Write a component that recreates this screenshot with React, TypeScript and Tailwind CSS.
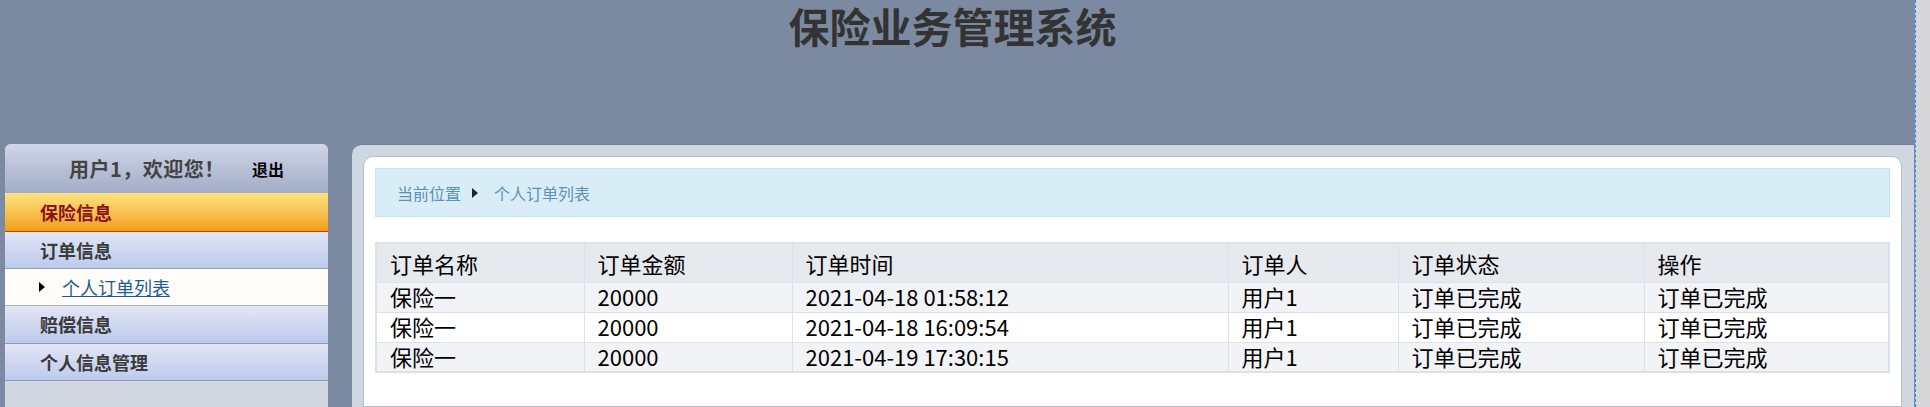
const menu = [
  { label: "保险信息", active: true, h: "h-[39px]" },
  { label: "订单信息", active: false, h: "h-[37px]" },
];

const rows = [
  ["保险一", "20000", "2021-04-18 01:58:12", "用户1", "订单已完成", "订单已完成"],
  ["保险一", "20000", "2021-04-18 16:09:54", "用户1", "订单已完成", "订单已完成"],
  ["保险一", "20000", "2021-04-19 17:30:15", "用户1", "订单已完成", "订单已完成"],
];

const heads = ["订单名称", "订单金额", "订单时间", "订单人", "订单状态", "操作"];
const widths = ["w-[208px]", "w-[208px]", "w-[436px]", "w-[170px]", "w-[246px]", ""];

const App = () => {
  return (
    <div className="flex h-[407px] w-[1930px] overflow-hidden bg-[#7b8aa1] font-['Noto_Sans_CJK_SC',sans-serif]">
      <div className="flex w-[1915px] shrink-0 flex-col">
        {/* Top banner */}
        <header className="h-[144px] shrink-0 pr-[10px] text-center">
          <h1 className="pt-px text-[41px] font-bold leading-[49px] text-[#333]">保险业务管理系统</h1>
        </header>

        <div className="flex min-h-0 flex-1 gap-[24px] pl-[5px]">
          {/* Sidebar */}
          <aside className="flex w-[323px] shrink-0 flex-col overflow-hidden rounded-t-[6px] bg-[#d1d7e1]">
            <div className="flex h-[49px] shrink-0 items-center bg-gradient-to-b from-[#d0d6e8] to-[#a2acc7] pl-[64px]">
              <span className="inline-block w-[183px] text-[20px] font-bold tracking-[0.5px] text-[#444]">用户1，欢迎您！</span>
              <span className="text-[16px] font-bold text-black">退出</span>
            </div>

            {menu.map((m) =>
              m.active ? (
                <div
                  key={m.label}
                  className={`flex ${m.h} items-center border-b border-[#c23c16] bg-gradient-to-b from-[#fee37f] to-[#f0a00b] pl-[35px] text-[18px] font-bold text-[#8b1212]`}
                >
                  {m.label}
                </div>
              ) : (
                <div
                  key={m.label}
                  className={`flex ${m.h} items-center border-b border-[#8f9ab5] bg-gradient-to-b from-[#e3e6f4] to-[#bccaec] pl-[35px] text-[18px] font-bold text-[#3a3a3a]`}
                >
                  {m.label}
                </div>
              )
            )}

            <div className="flex h-[37px] items-center border-b border-[#a9b1c4] bg-[#fffcfa] pl-[34px]">
              <span className="h-0 w-0 border-y-[5px] border-l-[6px] border-y-transparent border-l-black" />
              <a className="ml-[17px] text-[18px] text-[#1c5f8f] underline">个人订单列表</a>
            </div>

            <div className="flex h-[38px] items-center border-b border-[#8f9ab5] bg-gradient-to-b from-[#e3e6f4] to-[#bccaec] pl-[35px] text-[18px] font-bold text-[#3a3a3a]">
              赔偿信息
            </div>
            <div className="flex h-[37px] items-center border-b border-[#8f9ab5] bg-gradient-to-b from-[#e3e6f4] to-[#bccaec] pl-[35px] text-[18px] font-bold text-[#3a3a3a]">
              个人信息管理
            </div>
          </aside>

          {/* Main panel */}
          <main className="mr-px min-w-0 flex-1 rounded-tl-[10px] border-t border-[#727ea6] bg-[#d1d7e1] pl-[11px] pr-[12px] pt-[11px]">
            <div className="h-full rounded-t-[10px] border border-[#b6bdcd] bg-white px-[11px] pt-[11px]">
              <div className="flex h-[49px] items-center border border-[#bce8f1] bg-[#d9edf7] pl-[21px] text-[16px] text-[#5a91b8]">
                <span>当前位置</span>
                <span className="ml-[11px] mr-[16px] h-0 w-0 border-y-[5px] border-l-[6px] border-y-transparent border-l-[#222]" />
                <span>个人订单列表</span>
              </div>

              <table className="mt-[25px] w-full table-fixed border-collapse border-2 border-[#dde0e5] text-left text-[22px] text-black">
                <thead>
                  <tr className="h-[39px] bg-[#e6e9ee]">
                    {heads.map((h, i) => (
                      <th key={h} className={`${widths[i]} border border-[#dde0e5] pl-[13px] font-normal leading-[30px]`}>
                        {h}
                      </th>
                    ))}
                  </tr>
                </thead>
                <tbody>
                  {rows.map((r, ri) => (
                    <tr key={ri} className={`h-[30px] ${ri % 2 === 0 ? "bg-[#f2f3f7]" : "bg-white"}`}>
                      {r.map((c, ci) => (
                        <td key={ci} className="border border-[#dde0e5] pb-px pl-[13px] leading-[27px]">
                          {c}
                        </td>
                      ))}
                    </tr>
                  ))}
                </tbody>
              </table>
            </div>
          </main>
        </div>
      </div>

      {/* Frame edge */}
      <div className="w-[15px] shrink-0 border-l border-dashed border-[#1e90ff] bg-[#d6d6d8]" />
    </div>
  );
};

export default App;
